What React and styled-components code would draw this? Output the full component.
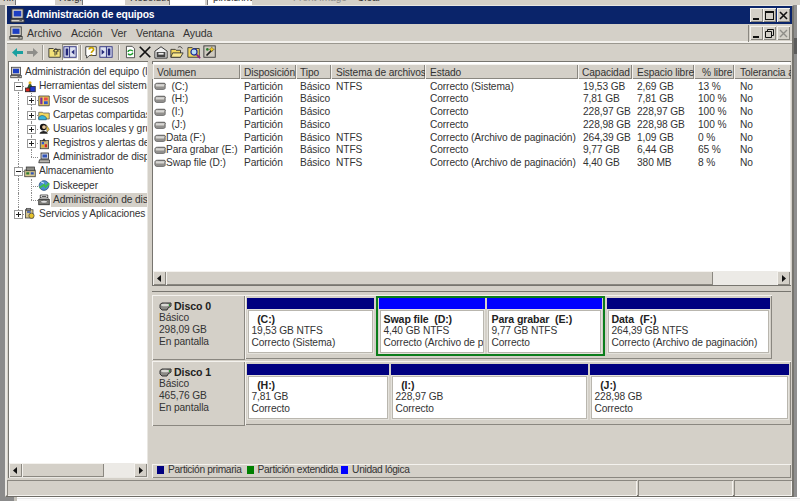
import React from "react";
import styled, { createGlobalStyle } from "styled-components";

const Global = createGlobalStyle`
  html, body { margin: 0; padding: 0; background: #fff; overflow: hidden; }
  #root { width: 800px; height: 501px; }
  * { box-sizing: border-box; }
`;

const face = "#d4d0c8";
const raised = "box-shadow: inset 1px 1px 0 #f4f2ee, inset -1px -1px 0 #8a8780;";
const sunken = "box-shadow: inset 1px 1px 0 #8a8780, inset -1px -1px 0 #f4f2ee;";

const Page = styled.div`
  width: 800px; height: 501px; display: flex; flex-direction: column; overflow: hidden;
  background: #fff; color: #2a2a2a;
  font: 10.2px/12px "Liberation Sans", Arial, sans-serif; letter-spacing: -0.1px;
`;
const TopStrip = styled.div`
  height: 5px; flex: none; display: flex; background: ${face}; overflow: hidden; align-items: flex-start;
`;
const StripLabel = styled.span`
  width: ${p => p.$w}px; flex: none; margin-top: -8px; padding-left: ${p => p.$pad || 3}px; white-space: nowrap; color: ${p => p.$dim ? "#8f8d88" : "#333"}; height: 13px;
`;
const StripField = styled.span`
  width: ${p => p.$w}px; flex: none; height: 5px; background: #fff; border-left: 1px solid #777; margin-right: 2px;
  white-space: nowrap; overflow: hidden;
`;
const StripFieldText = styled.span`display: block; margin-top: -8px; padding-left: 5px; color: #333;`;
const Middle = styled.div`display: flex; flex: none; height: 492px;`;
const LeftEdge = styled.div`width: 5px; background: #8b8b8b;`;
const RightEdge = styled.div`
  width: 6px; background: #fff; border-left: 3px solid #8f8f8f; position: relative;
`;
const BehindThumb = styled.span`
  position: absolute; left: -3px; top: 33px; width: 3px; height: 16px; background: #5c5c5c;
`;
const BottomEdge = styled.div`
  flex: 1; display: flex;
`;
const BottomGray = styled.div`width: 17px; background: #8b8b8b; border-right: 3px solid #c5c2ba;`;
const BottomWhite = styled.div`flex: 1; background: #fbfbfb; margin-top: 1px; border-top: 1px solid #e8e8e8;`;

const Window = styled.div`
  width: 789px; height: 492px; flex: none; background: ${face};
  border: 1px solid #e9e7e2; border-left-width: 2px; border-right: 2px solid #77756f; border-bottom: 2px solid #6e6c66;
  display: flex; flex-direction: column;
`;
const TitleBar = styled.div`
  height: 18px; flex: none; background: #0a246a; display: flex; align-items: center; padding: 0 2px 0 3px;
`;
const TitleText = styled.span`
  color: #fff; font: bold 10.3px/14px "Liberation Sans", Arial, sans-serif; margin-left: 1px; flex: 1; letter-spacing: -0.15px;
`;
const WinBtn = styled.span`
  width: 13px; height: 14px; flex: none; background: ${face}; ${raised} display: flex; align-items: center; justify-content: center; margin-left: ${p => p.$gap || 0}px;
`;
const MenuBar = styled.div`
  height: 19px; flex: none; display: flex; align-items: center; padding: 0 2px 0 2px;
  border-bottom: 1px solid #f2f0ec; box-shadow: 0 -1px 0 #f2f0ec inset, 0 1px 0 #9a978f;
`;
const MenuIcon = styled.span`display: flex; width: 14px; height: 14px; margin-right: 4px; flex: none;`;
const MenuItems = styled.div`
  display: flex; flex: 1; height: 17px; align-items: center; font-size: 10.6px; border-right: 1px solid #8a8780;
`;
const MenuItem = styled.span`width: ${p => p.$w}px; flex: none; color: #333;`;
const ToolBar = styled.div`
  height: 16px; flex: none; display: flex; align-items: center; padding-left: 4px; margin-top: 1px;
`;
const ToolIcon = styled.span`
  width: ${p => p.$w || 15}px; height: 16px; flex: none; display: flex; align-items: center; justify-content: center;
  ${p => p.$on && "background:#e6e3dd; box-shadow: inset 1px 1px 0 #8f8c84, inset -1px -1px 0 #fff;"}
`;
const ToolSep = styled.span`
  width: 2px; height: 15px; flex: none; margin: 0 ${p => p.$m || 4}px; border-left: 1px solid #9a978f; border-right: 1px solid #f4f2ee;
`;
const Panes = styled.div`
  height: 417px; flex: none; margin-top: 1px; padding: 0 1px; display: flex;
`;
const LeftPane = styled.div`
  width: 140px; flex: none; display: flex; flex-direction: column; background: #fff; padding-top: 2px;
  box-shadow: inset 1px 1px 0 #77756f, inset -1px -1px 0 #e9e7e2;
`;
const Tree = styled.div`
  flex: 1; min-height: 0; overflow: hidden; padding: 2px 1px 0 0;
`;
const TreeRowBox = styled.div`
  height: 14.2px; display: flex; align-items: center; white-space: nowrap; padding-left: ${p => p.$root ? 2 : 3}px;
`;
const Slot = styled.span`
  width: ${p => p.$w}px; height: 14.2px; flex: none; position: relative;
  &::before {
    content: ""; position: absolute; left: 50%; top: 0;
    height: ${p => p.$kind === "end" ? "50%" : p.$kind === "blank" ? 0 : "100%"};
    border-left: 1px dotted #8b8b8b;
  }
  &::after {
    content: ""; position: absolute; left: 50%; top: 50%; width: ${p => p.$kind === "pass" || p.$kind === "blank" ? 0 : "50%"};
    border-top: 1px dotted #8b8b8b;
  }
`;
const Expander = styled.span`
  position: absolute; left: 50%; top: 50%; width: 9px; height: 9px; margin: -4px 0 0 -4px; z-index: 1;
  background: #fff; border: 1px solid #9a9a9a; display: block;
  &::before { content: ""; position: absolute; left: 1px; top: 3px; width: 5px; height: 1px; background: #222; }
  &::after { content: ""; position: absolute; left: 3px; top: 1px; width: 1px; height: 5px; background: #222; display: ${p => p.$open ? "none" : "block"}; }
`;
const TreeIcon = styled.span`width: 12px; height: 13px; flex: none; display: flex; align-items: center; margin-right: ${p => p.$sel ? 1 : 3}px;`;
const TreeLabel = styled.span`
  flex: 1; min-width: 0; height: 14px; line-height: 14px; color: #333; overflow: hidden;
  ${p => p.$sel && `background: ${face}; padding-left: 2px;`}
`;
const HScroll = styled.div`
  height: 14px; flex: none; display: flex; background: #eceae6; margin: ${p => p.$m || "0 1px 1px 1px"};
`;
const ScrollBtn = styled.span`
  width: 13px; flex: none; background: ${face}; ${raised} display: flex; align-items: center; justify-content: center;
`;
const Thumb = styled.span`width: ${p => p.$w}px; flex: none; background: ${face}; ${raised}`;
const Spacer = styled.span`flex: 1;`;
const Splitter = styled.div`width: 4px; flex: none;`;
const RightPane = styled.div`
  width: 639px; flex: none; display: flex; flex-direction: column;
`;
const ListPanel = styled.div`
  height: 224px; flex: none; display: flex; flex-direction: column; background: #fff; padding-top: 3px;
  box-shadow: inset 1px 1px 0 #77756f, inset -1px -1px 0 #e9e7e2; margin-right: 0;
`;
const cols = "87px 56px 35px 94px 153px 54px 62px 40px 57px";
const Header = styled.div`
  display: grid; grid-template-columns: ${cols}; height: 15px; flex: none; background: ${face}; padding-left: 1px; overflow: hidden;
`;
const HeaderCell = styled.span`
  ${raised} padding: 1px 0 0 ${p => p.$pad || 4}px; line-height: 15px; white-space: nowrap; overflow: hidden; color: #333;
`;
const Rows = styled.div`flex: 1; min-height: 0; padding: 1.5px 0 0 1px; overflow: hidden;`;
const ListRow = styled.div`
  display: grid; grid-template-columns: ${cols}; height: 12.8px; line-height: 12.8px;
`;
const Cell = styled.span`padding-left: ${p => p.$pad || 4}px; white-space: pre; overflow: hidden; color: #333;`;
const VolumeCell = styled.span`display: flex; align-items: center; padding-left: 1px; white-space: pre; color: #333;`;
const ListScroll = styled(HScroll)`background: #eceae6;`;
const HSplit = styled.div`
  height: 7px; flex: none; border-top: 1px solid #77756f; border-bottom: 1px solid #77756f; margin-top: 0;
`;
const Graph = styled.div`
  flex: 1; min-height: 0; padding-top: 3px; display: flex; flex-direction: column; gap: 1px;
`;
const DiskRow = styled.div`display: flex; height: 65px; flex: none;`;
const DiskLabel = styled.div`
  width: 93px; flex: none; background: ${face}; ${raised} padding: 5px 0 0 7px; line-height: 12.2px; color: #333;
`;
const DiskName = styled.div`
  display: flex; align-items: center; font-weight: 700; font-size: 10.6px; height: 12px; color: #222;
`;
const DiskIconBox = styled.span`display: flex; width: 15px; flex: none;`;
const Strip = styled.div`
  ${p => `width: ${p.$w}px;`} flex: none; display: flex; padding: 3px 0 0 2px; gap: 2px; ${raised} height: 64px;
`;
const Extended = styled.div`
  display: flex; gap: 2px; border: 2px solid #0b7d1b; margin-top: -2px; height: 60px; padding: 0 1px;
`;
const Partition = styled.div`width: ${p => p.$w}px; flex: none; height: 55px; display: flex; flex-direction: column;`;
const Bar = styled.div`height: 12px; flex: none; background: ${p => p.$color};`;
const PartBox = styled.div`
  flex: 1; margin: 1px 2px 1px 2px; background: #fff; padding: 2px 0 0 2.5px; line-height: 12.2px;
  box-shadow: 0 0 0 1px #b9b6ae, 0 0 0 2px #e4e2dc; white-space: pre; overflow: hidden; color: #333;
`;
const PartName = styled.div`font-weight: 700; font-size: 10.6px; color: #222;`;
const Legend = styled.div`
  height: 14px; flex: none; display: flex; align-items: center; padding: 0 0 2px 5px; letter-spacing: -0.32px; ${raised}
`;
const Swatch = styled.span`width: 7px; height: 8px; flex: none; background: ${p => p.$c}; margin-right: 4px;`;
const LegendText = styled.span`margin-right: ${p => p.$m}px; color: #333;`;
const Status = styled.div`
  height: 16px; flex: none; margin-top: 2px; display: grid; grid-template-columns: 630px 95px 1fr; gap: 1px;
`;
const StatusCell = styled.span`${sunken}`;

const Mon = ({ s = 14 }) => (
  <svg width={s} height={s} viewBox="0 0 16 16">
    <rect x="2" y="1" width="12" height="10" fill="#d4d0c8" stroke="#333" />
    <rect x="4" y="3" width="8" height="6" fill="#1d3fc4" />
    <rect x="1" y="12" width="14" height="3" fill="#d4d0c8" stroke="#333" />
    <rect x="10" y="13" width="3" height="1" fill="#444" />
  </svg>
);
const Drive = ({ w = 12 }) => (
  <svg width={w} height="9" viewBox="0 0 13 9" style={{ flex: "none" }}>
    <path d="M1 3.5 C1 1.5 2 1 4 1 H11 C12.500 1 12.500 2.500 12 3.500 V6 C12 7.500 11 7.500 10 7.500 H3 C1.500 7.500 1 6.500 1 5 Z" fill="#b5b3ae" stroke="#4d4d4d" />
    <path d="M2 3 H11" stroke="#f2f2f2" />
    <path d="M2 6 H11" stroke="#777" />
  </svg>
);
const DiskGlyph = () => (
  <svg width="13" height="9" viewBox="0 0 13 9">
    <path d="M1 2.500 L3 1 H12 V4 L9 6 L8 8 H3 L1 6 Z" fill="#8b8b86" stroke="#333" />
    <ellipse cx="6" cy="3" rx="4" ry="1.300" fill="#d9d9d4" />
    <rect x="10" y="2" width="1" height="2" fill="#2f9a33" />
  </svg>
);
const Tri = ({ dir }) => (
  <svg width="5" height="7" viewBox="0 0 5 7">
    <path d={dir === "l" ? "M4 0 V7 L0 3.500 Z" : "M1 0 V7 L5 3.500 Z"} fill="#111" />
  </svg>
);
const Arrow = ({ dir, c }) => (
  <svg width="11" height="9" viewBox="0 0 11 9">
    <path d={dir === "l" ? "M0 4.500 L5 0 V3 H11 V6 H5 V9 Z" : "M11 4.500 L6 0 V3 H0 V6 H6 V9 Z"} fill={c} />
  </svg>
);
const Tool = ({ n }) => {
  const p = { width: 14, height: 14, viewBox: "0 0 16 16" };
  switch (n) {
    case "up": return <svg {...p}><path d="M1 4 H6 L7 5 H14 V14 H1 Z" fill="#f4e27a" stroke="#333" /><path d="M8 12 V7 H6 L9 4 L12 7 H10 V11" fill="none" stroke="#222" /></svg>;
    case "tree": return <svg {...p}><rect x="1" y="2" width="14" height="12" fill="#dfe3f2" stroke="#23277a" /><rect x="3" y="4" width="3" height="8" fill="#23277a" /><path d="M7.500 2 V14" stroke="#23277a" /><path d="M13 5 L9.500 8 L13 11 Z" fill="#23277a" /></svg>;
    case "help": return <svg {...p}><path d="M2 2 H14 V12 H6 L3 15 V12 H2 Z" fill="#fff" stroke="#333" /><path d="M6 5 C6 2.500 11 2.500 11 5 C11 7 8.500 7 8.500 9 M8.500 10.500 V12" fill="none" stroke="#c9a400" strokeWidth="2" /></svg>;
    case "panel": return <svg {...p}><rect x="1" y="2" width="14" height="12" fill="#dfe3f2" stroke="#23277a" /><rect x="10" y="4" width="3" height="8" fill="#23277a" /><path d="M8.500 2 V14" stroke="#23277a" /><path d="M3 5 L6.500 8 L3 11 Z" fill="#23277a" /></svg>;
    case "refresh": return <svg {...p}><path d="M3 1 H10 L13 4 V15 H3 Z" fill="#fff" stroke="#333" /><path d="M5 8 C5 5 10 5 11 7 M11 9 C10 12 6 12 5 10" fill="none" stroke="#1d9a2a" strokeWidth="1.600" /></svg>;
    case "x": return <svg {...p}><path d="M2 2 L14 14 M14 2 L2 14" stroke="#111" strokeWidth="2" /></svg>;
    case "props": return <svg {...p}><path d="M1 7 L8 2 L15 7 V15 H1 Z" fill="#eee" stroke="#222" /><rect x="3" y="8" width="10" height="6" fill="#444" /><rect x="5" y="9" width="6" height="2" fill="#eee" /></svg>;
    case "open": return <svg {...p}><path d="M1 5 H6 L7 6 H12 V14 H1 Z" fill="#f3d75c" stroke="#333" /><path d="M3 9 H15 L12 14 H1 Z" fill="#f9e88e" stroke="#333" /><path d="M9 3 C11 1 13 2 14 4" fill="none" stroke="#222" /></svg>;
    case "find": return <svg {...p}><path d="M1 3 H6 L7 4 H14 V14 H1 Z" fill="#f3d75c" stroke="#333" /><circle cx="8" cy="8" r="3.500" fill="#b9dcf5" stroke="#1b2f9a" strokeWidth="1.400" /><path d="M11 11 L15 15" stroke="#8a1f7f" strokeWidth="2" /></svg>;
    case "wiz": return <svg {...p}><rect x="1" y="1" width="13" height="13" fill="#cfcabf" stroke="#333" /><path d="M4 12 L11 5" stroke="#222" strokeWidth="2" /><path d="M10 2 L11 4 L13 5 L11 6 L10 8 L9 6 L7 5 L9 4 Z" fill="#f2cc2e" stroke="#665500" strokeWidth=".5" /><circle cx="5" cy="5" r="1.500" fill="#2a7b2e" /></svg>;
    default: return null;
  }
};
const Leaf = ({ n }) => {
  const p = { width: 13, height: 13, viewBox: "0 0 16 16" };
  switch (n) {
    case "tools": return <svg {...p}><path d="M3 14 L8 3 L13 14 Z" fill="#2f7d32" stroke="#222" /><rect x="2" y="10" width="6" height="5" fill="#d5261e" stroke="#222" /><rect x="8" y="8" width="7" height="7" fill="#2138c9" stroke="#222" /><circle cx="8" cy="3" r="2" fill="#e6b422" /></svg>;
    case "event": return <svg {...p}><path d="M1 2 H15 V15 H1 Z" fill="#efcb5b" stroke="#333" /><rect x="3" y="4" width="3" height="9" fill="#7a2a9a" /><rect x="8" y="4" width="5" height="4" fill="#e84a4a" /><rect x="8" y="9" width="5" height="4" fill="#2f57c9" /></svg>;
    case "share": return <svg {...p}><path d="M1 5 H6 L7 6 H15 V14 H1 Z" fill="#f3d75c" stroke="#555" /><path d="M1 12 C4 8 8 9 11 12 V15 H1 Z" fill="#39b4d8" stroke="#1d5f7a" /></svg>;
    case "users": return <svg {...p}><circle cx="7" cy="6" r="4.500" fill="#111" /><circle cx="8" cy="6" r="2.500" fill="#e8c8a0" /><path d="M2 15 C3 10 12 10 13 15 Z" fill="#222" /><path d="M11 3 L15 9 L12 13 Z" fill="#f0c83a" stroke="#333" strokeWidth=".6" /></svg>;
    case "logs": return <svg {...p}><rect x="3" y="4" width="11" height="11" fill="#c8b27a" stroke="#333" /><rect x="5" y="6" width="3" height="3" fill="#2f57c9" /><rect x="9" y="9" width="3" height="4" fill="#d5261e" /><path d="M8 1 L11 5 L5 5 Z" fill="#333" /><rect x="5" y="10" width="3" height="3" fill="#e6b422" /></svg>;
    case "device": return <svg {...p}><rect x="4" y="2" width="10" height="8" fill="#cfd3dc" stroke="#222" /><rect x="6" y="4" width="6" height="4" fill="#3254b8" /><path d="M2 11 H15 L16 15 H1 Z" fill="#b9b6ae" stroke="#222" /></svg>;
    case "storage": return <svg {...p}><rect x="1" y="6" width="14" height="9" fill="#d7c78f" stroke="#333" /><rect x="3" y="2" width="11" height="5" fill="#8c8c86" stroke="#333" /><rect x="3" y="9" width="4" height="3" fill="#2f7d32" /><rect x="9" y="9" width="4" height="3" fill="#3254b8" /></svg>;
    case "dk": return <svg {...p}><circle cx="8" cy="8" r="6.500" fill="#4a8fd0" stroke="#274d7a" /><path d="M2 11 L8 7 L10 10 L15 5" fill="none" stroke="#3fbf4a" strokeWidth="2.500" /><path d="M4 3 L8 5" stroke="#cfe6ff" strokeWidth="1.500" /></svg>;
    case "disk": return <svg {...p}><path d="M3 2 H13 V6 H3 Z" fill="#fff" stroke="#222" /><path d="M5 4 H11" stroke="#222" /><rect x="1" y="8" width="14" height="7" fill="#7f7f7a" stroke="#222" /><ellipse cx="8" cy="11" rx="4.500" ry="2" fill="#ddd" stroke="#222" strokeWidth=".6" /><path d="M2 7 L4 5 M14 7 L12 5" stroke="#222" /></svg>;
    case "svc": return <svg {...p}><rect x="2" y="3" width="10" height="11" fill="#d7c78f" stroke="#333" /><circle cx="10" cy="11" r="3.500" fill="#e6c22a" stroke="#444" /><rect x="4" y="5" width="5" height="2" fill="#3254b8" /><rect x="3" y="1" width="6" height="3" fill="#888" stroke="#333" strokeWidth=".7" /></svg>;
    case "comp": return <Mon s={13} />;
    default: return null;
  }
};

const treeRows = [
  { t: "Administración del equipo (local)", i: "comp", s: [] },
  { t: "Herramientas del sistema", i: "tools", s: ["tee"], e: "-" },
  { t: "Visor de sucesos", i: "event", s: ["pass", "tee"], e: "+" },
  { t: "Carpetas compartidas", i: "share", s: ["pass", "tee"], e: "+" },
  { t: "Usuarios locales y grupos", i: "users", s: ["pass", "tee"], e: "+" },
  { t: "Registros y alertas de rendimiento", i: "logs", s: ["pass", "tee"], e: "+" },
  { t: "Administrador de dispositivos", i: "device", s: ["pass", "end"] },
  { t: "Almacenamiento", i: "storage", s: ["tee"], e: "-" },
  { t: "Diskeeper", i: "dk", s: ["pass", "tee"] },
  { t: "Administración de discos", i: "disk", s: ["pass", "end"], sel: true },
  { t: "Servicios y Aplicaciones", i: "svc", s: ["end"], e: "+" },
];
const slotW = [13, 14];

const headers = ["Volumen", "Disposición", "Tipo", "Sistema de archivos", "Estado", "Capacidad", "Espacio libre", "% libre", "Tolerancia a errores"];
const headerPad = [4, 4, 4, 5, 5, 4, 5, 8, 6];
const volumes = [
  ["  (C:)", "Partición", "Básico", "NTFS", "Correcto (Sistema)", "19,53 GB", "2,69 GB", "13 %", "No"],
  ["  (H:)", "Partición", "Básico", "", "Correcto", "7,81 GB", "7,81 GB", "100 %", "No"],
  ["  (I:)", "Partición", "Básico", "", "Correcto", "228,97 GB", "228,97 GB", "100 %", "No"],
  ["  (J:)", "Partición", "Básico", "", "Correcto", "228,98 GB", "228,98 GB", "100 %", "No"],
  ["Data (F:)", "Partición", "Básico", "NTFS", "Correcto (Archivo de paginación)", "264,39 GB", "1,09 GB", "0 %", "No"],
  ["Para grabar (E:)", "Partición", "Básico", "NTFS", "Correcto", "9,77 GB", "6,44 GB", "65 %", "No"],
  ["Swap file (D:)", "Partición", "Básico", "NTFS", "Correcto (Archivo de paginación)", "4,40 GB", "380 MB", "8 %", "No"],
];
const cellPad = [4, 4, 5, 5, 5, 5, 4, 6];

const Part = ({ w, color, name, size, state }) => (
  <Partition $w={w}>
    <Bar $color={color} />
    <PartBox>
      <PartName>{name}</PartName>
      <div>{size}</div>
      <div>{state}</div>
    </PartBox>
  </Partition>
);
const DiskInfo = ({ name, size }) => (
  <DiskLabel>
    <DiskName><DiskIconBox><DiskGlyph /></DiskIconBox>{name}</DiskName>
    <div>Básico</div>
    <div>{size}</div>
    <div>En pantalla</div>
  </DiskLabel>
);

export default function App() {
  return (
    <Page>
      <Global />
      <TopStrip>
        <StripLabel $w={15}>h.:</StripLabel><StripField $w={40} />
        <StripLabel $w={25} $pad={2}>Height:</StripLabel><StripField $w={43} />
        <StripLabel $w={42} $pad={3}>Resolution:</StripLabel><StripField $w={36} />
        <StripField $w={45}><StripFieldText>pixels/inch</StripFieldText></StripField>
        <StripLabel $w={25} />
        <StripLabel $w={66} $pad={14} $dim>Front Image</StripLabel>
        <StripLabel $w={40} $pad={12}>Clear</StripLabel>
      </TopStrip>
      <Middle>
        <LeftEdge />
        <Window>
          <TitleBar>
            <Mon s={15} />
            <TitleText>Administración de equipos</TitleText>
            <WinBtn><svg width="9" height="9"><rect x="1" y="7" width="6" height="2" fill="#111" /></svg></WinBtn>
            <WinBtn><svg width="9" height="9"><rect x=".5" y=".5" width="8" height="8" fill="none" stroke="#111" /><rect x="0" y="0" width="9" height="2" fill="#111" /></svg></WinBtn>
            <WinBtn $gap={1}><svg width="9" height="9"><path d="M1 1 L8 8 M8 1 L1 8" stroke="#111" strokeWidth="1.600" /></svg></WinBtn>
          </TitleBar>
          <MenuBar>
            <MenuIcon><Mon s={14} /></MenuIcon>
            <MenuItems>
              <MenuItem $w={44}>Archivo</MenuItem>
              <MenuItem $w={40}>Acción</MenuItem>
              <MenuItem $w={25}>Ver</MenuItem>
              <MenuItem $w={47}>Ventana</MenuItem>
              <MenuItem $w={40}>Ayuda</MenuItem>
            </MenuItems>
            <WinBtn $gap={1}><svg width="9" height="9"><rect x="1" y="7" width="6" height="2" fill="#111" /></svg></WinBtn>
            <WinBtn><svg width="9" height="9"><path d="M2.500 2.500 V.5 H8.500 V6.500 H6.500 M.5 2.500 H6.500 V8.500 H.5 Z" fill="none" stroke="#111" /></svg></WinBtn>
            <WinBtn $gap={1}><svg width="9" height="9"><path d="M1 1 L8 8 M8 1 L1 8" stroke="#8f8d88" strokeWidth="1.400" /></svg></WinBtn>
          </MenuBar>
          <ToolBar>
            <ToolIcon $w={12}><Arrow dir="l" c="#1aa0a0" /></ToolIcon>
            <ToolIcon $w={3} />
            <ToolIcon $w={12}><Arrow dir="r" c="#8e8e8a" /></ToolIcon>
            <ToolSep $m={4} />
            <ToolIcon $w={14}><Tool n="up" /></ToolIcon>
            <ToolIcon $w={16} $on><Tool n="tree" /></ToolIcon>
            <ToolSep $m={2} />
            <ToolIcon $w={14}><Tool n="help" /></ToolIcon>
            <ToolIcon $w={16}><Tool n="panel" /></ToolIcon>
            <ToolSep $m={4} />
            <ToolIcon $w={13}><Tool n="refresh" /></ToolIcon>
            <ToolIcon $w={16}><Tool n="x" /></ToolIcon>
            <ToolIcon $w={16}><Tool n="props" /></ToolIcon>
            <ToolIcon $w={16}><Tool n="open" /></ToolIcon>
            <ToolIcon $w={17}><Tool n="find" /></ToolIcon>
            <ToolIcon $w={16}><Tool n="wiz" /></ToolIcon>
          </ToolBar>
          <Panes>
            <LeftPane>
              <Tree>
                {treeRows.map(r => (
                  <TreeRowBox key={r.t} $root={r.s.length === 0}>
                    {r.s.map((k, i) => (
                      <Slot key={i} $w={slotW[i]} $kind={k}>
                        {r.e && i === r.s.length - 1 && <Expander $open={r.e === "-"} />}
                      </Slot>
                    ))}
                    <TreeIcon $sel={r.sel}><Leaf n={r.i} /></TreeIcon>
                    <TreeLabel $sel={r.sel}>{r.t}</TreeLabel>
                  </TreeRowBox>
                ))}
              </Tree>
              <HScroll>
                <ScrollBtn><Tri dir="l" /></ScrollBtn>
                <Thumb $w={82} />
                <Spacer />
                <ScrollBtn><Tri dir="r" /></ScrollBtn>
              </HScroll>
            </LeftPane>
            <Splitter />
            <RightPane>
              <ListPanel>
                <Header>
                  {headers.map((h, i) => <HeaderCell key={h} $pad={headerPad[i]}>{h}</HeaderCell>)}
                </Header>
                <Rows>
                  {volumes.map(v => (
                    <ListRow key={v[0]}>
                      <VolumeCell><Drive />{v[0]}</VolumeCell>
                      {v.slice(1).map((c, i) => <Cell key={i} $pad={cellPad[i]}>{c}</Cell>)}
                    </ListRow>
                  ))}
                </Rows>
                <ListScroll $m="0 1px 0 1px">
                  <ScrollBtn><Tri dir="l" /></ScrollBtn>
                  <Thumb $w={547} />
                  <Spacer />
                  <ScrollBtn><Tri dir="r" /></ScrollBtn>
                </ListScroll>
              </ListPanel>
              <HSplit />
              <Graph>
                <DiskRow>
                  <DiskInfo name="Disco 0" size="298,09 GB" />
                  <Strip $w={527}>
                    <Part w={127} color="#000080" name="  (C:)" size="19,53 GB NTFS" state="Correcto (Sistema)" />
                    <Extended>
                      <Part w={106} color="#0000ff" name="Swap file  (D:)" size="4,40 GB NTFS" state="Correcto (Archivo de paginación)" />
                      <Part w={115} color="#0000ff" name="Para grabar  (E:)" size="9,77 GB NTFS" state="Correcto" />
                    </Extended>
                    <Part w={163} color="#000080" name="Data  (F:)" size="264,39 GB NTFS" state="Correcto (Archivo de paginación)" />
                  </Strip>
                </DiskRow>
                <DiskRow>
                  <DiskInfo name="Disco 1" size="465,76 GB" />
                  <Strip $w={546}>
                    <Part w={142} color="#000080" name="  (H:)" size="7,81 GB" state="Correcto" />
                    <Part w={197} color="#000080" name="  (I:)" size="228,97 GB" state="Correcto" />
                    <Part w={199} color="#000080" name="  (J:)" size="228,98 GB" state="Correcto" />
                  </Strip>
                </DiskRow>
              </Graph>
              <Legend>
                <Swatch $c="#000080" /><LegendText $m={5}>Partición primaria</LegendText>
                <Swatch $c="#008000" /><LegendText $m={3}>Partición extendida</LegendText>
                <Swatch $c="#0000ff" /><LegendText $m={0}>Unidad lógica</LegendText>
              </Legend>
            </RightPane>
          </Panes>
          <Status>
            <StatusCell /><StatusCell /><StatusCell />
          </Status>
        </Window>
        <RightEdge><BehindThumb /></RightEdge>
      </Middle>
      <BottomEdge>
        <BottomGray />
        <BottomWhite />
      </BottomEdge>
    </Page>
  );
}
